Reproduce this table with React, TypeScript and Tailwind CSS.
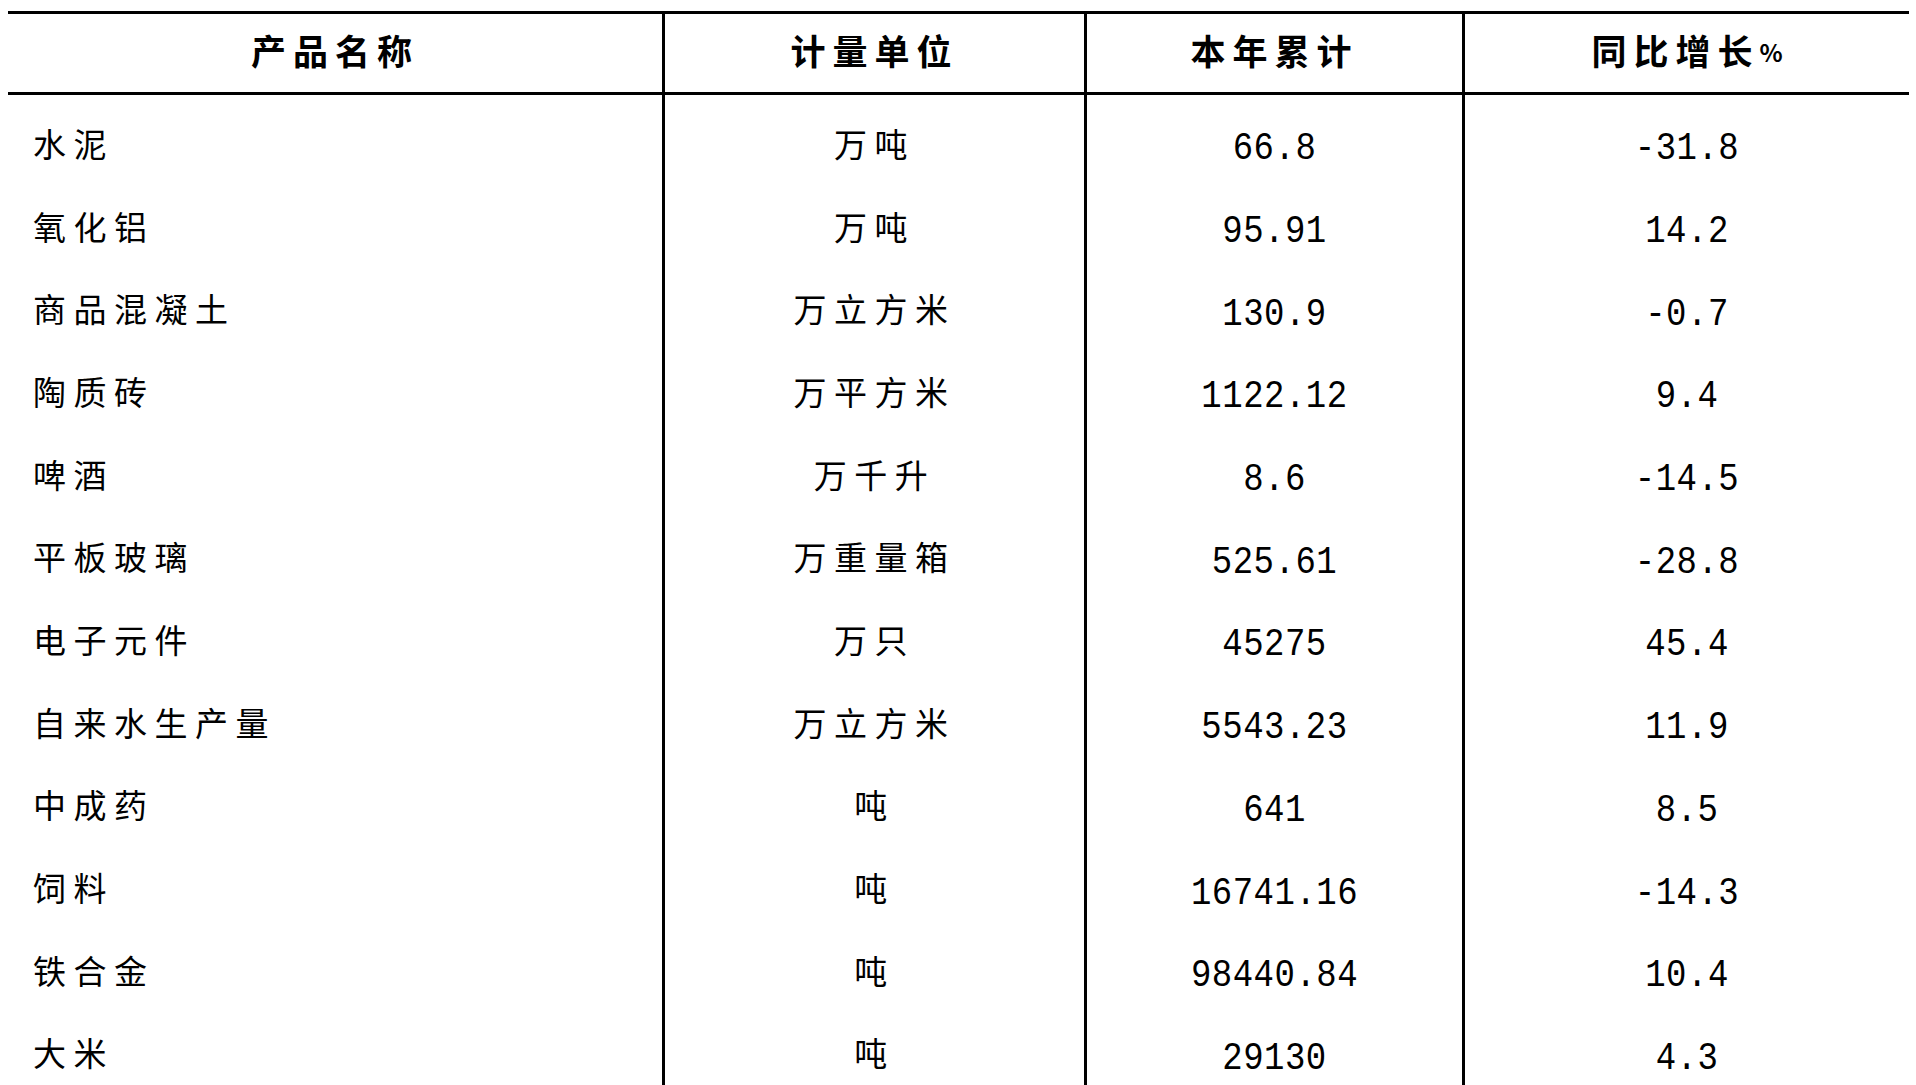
import React from "react";

const rows: [string, string, string, string][] = [
  ["水泥", "万吨", "66.8", "-31.8"],
  ["氧化铝", "万吨", "95.91", "14.2"],
  ["商品混凝土", "万立方米", "130.9", "-0.7"],
  ["陶质砖", "万平方米", "1122.12", "9.4"],
  ["啤酒", "万千升", "8.6", "-14.5"],
  ["平板玻璃", "万重量箱", "525.61", "-28.8"],
  ["电子元件", "万只", "45275", "45.4"],
  ["自来水生产量", "万立方米", "5543.23", "11.9"],
  ["中成药", "吨", "641", "8.5"],
  ["饲料", "吨", "16741.16", "-14.3"],
  ["铁合金", "吨", "98440.84", "10.4"],
  ["大米", "吨", "29130", "4.3"],
];

function HeadCell({ children, last }: { children: React.ReactNode; last?: boolean }) {
  return (
    <div
      className={
        last
          ? "flex items-center justify-center pb-[8px] text-[35px] font-bold tracking-[7px] leading-none font-['Noto_Sans_CJK_SC',sans-serif]"
          : "border-r-[3px] border-black flex items-center justify-center pb-[8px] text-[35px] font-bold tracking-[7px] leading-none font-['Noto_Sans_CJK_SC',sans-serif]"
      }
    >
      {children}
    </div>
  );
}

export default function App() {
  return (
    <div className="w-[1916px] h-[1085px] overflow-hidden bg-white pl-[8px] pr-[7px] pt-[11px] text-black">
      <div className="grid grid-cols-[657px_422px_378px_444px] border-t-[3px] border-b-[3px] border-black h-[84px]">
        <HeadCell>产品名称</HeadCell>
        <HeadCell>计量单位</HeadCell>
        <HeadCell>本年累计</HeadCell>
        <HeadCell last>
          <span className="tracking-[7px]">同比增长</span>
          <span className="text-[24px] font-bold tracking-normal mt-[6px]">%</span>
        </HeadCell>
      </div>
      <div className="grid grid-cols-[657px_422px_378px_444px] auto-rows-[82.7px]">
        {rows.map((r, i) => (
          <React.Fragment key={i}>
            <div className="border-r-[3px] border-black flex items-center pt-[14px] pl-[25px] text-[33px] tracking-[7.5px] leading-none font-['Noto_Sans_CJK_SC',sans-serif]">
              {r[0]}
            </div>
            <div className="border-r-[3px] border-black flex items-center justify-center pt-[14px] text-[33px] tracking-[7.5px] leading-none font-['Noto_Sans_CJK_SC',sans-serif]">
              {r[1]}
            </div>
            <div className="border-r-[3px] border-black flex items-center justify-center pt-[26px] text-[34px] tracking-[0.5px] leading-none font-['Liberation_Mono',monospace]">
              <span className="inline-block scale-y-[1.15]">{r[2]}</span>
            </div>
            <div className="flex items-center justify-center pt-[26px] text-[34px] tracking-[0.5px] leading-none font-['Liberation_Mono',monospace]">
              <span className="inline-block scale-y-[1.15]">{r[3]}</span>
            </div>
          </React.Fragment>
        ))}
      </div>
    </div>
  );
}
